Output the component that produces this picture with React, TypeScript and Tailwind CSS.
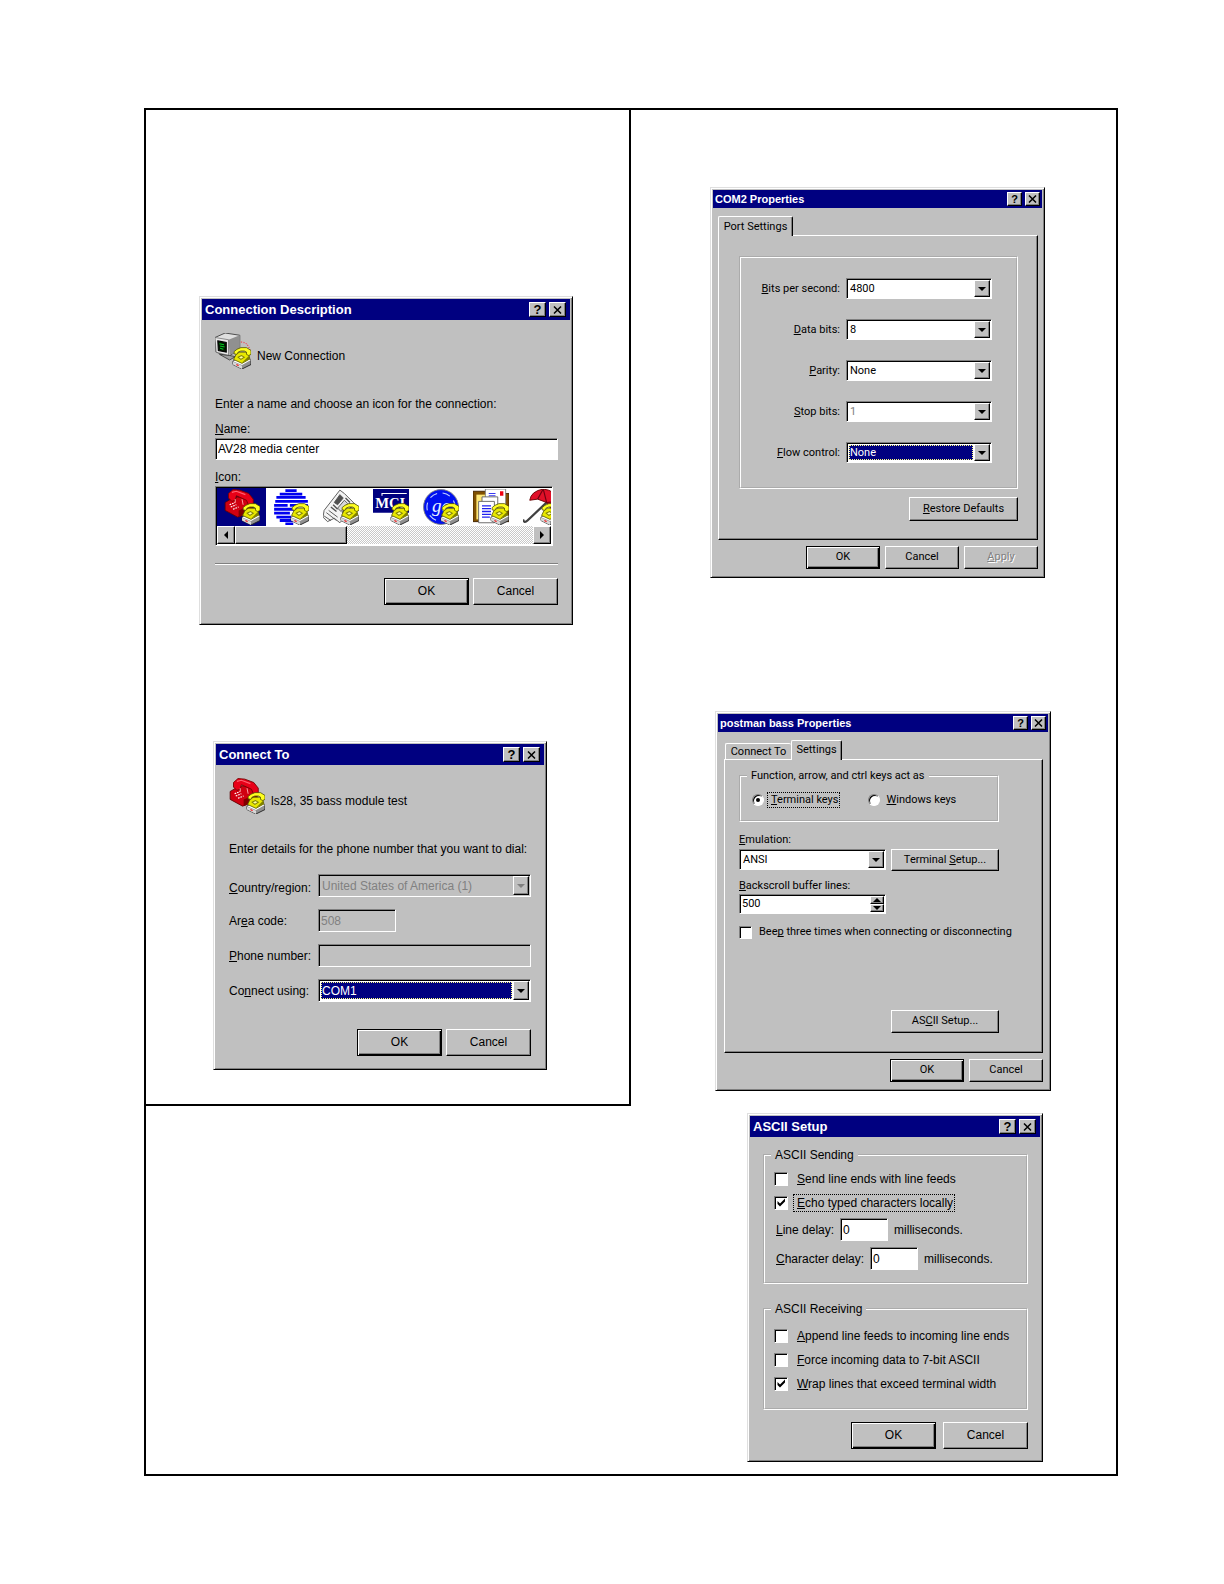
import { useId, useState } from 'react'
import type { ReactNode } from 'react'
import clsx from 'clsx'

const raised =
  'border border-t-white border-l-white border-r-black border-b-black bg-[#c0c0c0] shadow-[inset_-1px_-1px_#808080]'
const sunken =
  'border border-t-[#808080] border-l-[#808080] border-r-white border-b-white shadow-[inset_1px_1px_#000]'

// "&Name:" -> underlined N
function Mnemonic({ text }: { text: string }) {
  const i = text.indexOf('&')
  if (i < 0) return <>{text}</>
  return (
    <>
      {text.slice(0, i)}
      <u className="underline-offset-1 [text-decoration-skip-ink:none]">{text[i + 1]}</u>
      {text.slice(i + 2)}
    </>
  )
}

type DialogProps = {
  title: string
  small?: boolean
  className: string
  children: ReactNode
}

function Dialog({ title, small, className, children }: DialogProps) {
  const size = small ? 'h-[14px] w-[15px]' : 'h-[15px] w-[17px]'
  return (
    <section
      className={clsx(
        'border border-t-[#dfdfdf] border-l-[#dfdfdf] border-r-black border-b-black bg-[#c0c0c0] p-0.5 whitespace-nowrap shadow-[inset_1px_1px_#fff,inset_-1px_-1px_#808080]',
        small ? 'font-[Roboto,sans-serif] text-[11px] leading-[14px]' : 'text-[12px] leading-4',
        className,
      )}
    >
      <header
        className={clsx(
          'flex items-center gap-[3px] bg-[#000080] font-[Liberation_Sans,sans-serif] font-bold text-white',
          small ? 'h-[18px] pr-0.5 pl-0.5 text-[11px]' : 'h-[21px] pr-1 pl-[3px] text-[13px]',
        )}
      >
        <h2 className="flex-1">{title}</h2>
        <button aria-label="Help" className={clsx(raised, size, 'flex items-center justify-center text-black')}>
          ?
        </button>
        <button aria-label="Close" className={clsx(raised, size, 'flex items-center justify-center')}>
          <svg viewBox="0 0 9 8" className="h-2 w-[9px]">
            <path d="M1 .5 8 7.5M8 .5 1 7.5" stroke="#000" strokeWidth="1.5" />
          </svg>
        </button>
      </header>
      {children}
    </section>
  )
}

type PushButtonProps = {
  label: string
  primary?: boolean
  disabled?: boolean
  className: string
}

function PushButton({ label, primary, disabled, className }: PushButtonProps) {
  return (
    <button
      disabled={disabled}
      className={clsx(
        'pb-px text-center',
        primary
          ? 'border border-black bg-[#c0c0c0] shadow-[inset_1px_1px_#fff,inset_-1px_-1px_#000,inset_-2px_-2px_#808080]'
          : raised,
        disabled && 'text-[#808080] [text-shadow:1px_1px_#fff]',
        className,
      )}
    >
      <Mnemonic text={label} />
    </button>
  )
}

function ArrowIcon({ className, dim }: { className?: string; dim?: boolean }) {
  return (
    <svg viewBox="0 0 8 4" className={clsx('h-1 w-2', className)}>
      <path d="M0 0h8L4 4z" fill={dim ? '#808080' : '#000'} />
    </svg>
  )
}

type ComboProps = {
  id: string
  options: string[]
  focused?: boolean
  disabled?: boolean
  dim?: boolean
  className: string
}

function Combo({ id, options, focused, disabled, dim, className }: ComboProps) {
  return (
    <div className={clsx(sunken, 'flex p-px', disabled ? 'bg-[#c0c0c0]' : 'bg-white', className)}>
      <select
        id={id}
        disabled={disabled}
        className={clsx(
          'min-w-0 flex-1 appearance-none disabled:opacity-100',
          focused
            ? 'm-px bg-[#000080] pl-px text-white outline-1 -outline-offset-1 outline-dotted outline-[#ffff80]'
            : 'pl-0.5 outline-none',
          (disabled || dim) && 'text-[#808080]',
        )}
      >
        {options.map((o) => (
          <option key={o}>{o}</option>
        ))}
      </select>
      <span className={clsx(raised, 'flex w-4 items-center justify-center')}>
        <ArrowIcon dim={disabled} />
      </span>
    </div>
  )
}

type ToggleProps = {
  label: string
  checked?: boolean
  focused?: boolean
  small?: boolean
}

function Check({ label, checked, focused, small }: ToggleProps) {
  const id = useId()
  const [on, setOn] = useState(!!checked)
  return (
    <div className={clsx('flex items-center', small ? 'gap-[3px]' : 'gap-[5px]')}>
      <span className={clsx('grid shrink-0', small ? 'size-[13px]' : 'size-[14px]')}>
        <input
          id={id}
          type="checkbox"
          checked={on}
          onChange={(e) => setOn(e.target.checked)}
          className={clsx(sunken, 'col-start-1 row-start-1 appearance-none bg-white')}
        />
        {on && (
          <svg viewBox="0 0 14 14" className="pointer-events-none col-start-1 row-start-1">
            <path d="M3.5 5v3l2.500 2.500L11 5.500v-3L6 7.500z" fill="#000" />
          </svg>
        )}
      </span>
      <label
        htmlFor={id}
        className={clsx(
          'border border-dotted',
          small ? 'pl-[3px]' : 'pr-px pl-[3px]',
          focused ? 'border-black' : 'border-transparent',
        )}
      >
        <Mnemonic text={label} />
      </label>
    </div>
  )
}

function Radio({ label, checked, focused }: ToggleProps) {
  const id = useId()
  return (
    <div className="flex h-[15px] items-center gap-[3px]">
      <span className="grid size-3">
        <input
          id={id}
          type="radio"
          name="keys"
          defaultChecked={checked}
          className="peer col-start-1 row-start-1 appearance-none rounded-full border border-t-[#808080] border-l-[#808080] border-r-white border-b-white bg-white shadow-[inset_1px_1px_#000]"
        />
        <span className="pointer-events-none col-start-1 row-start-1 hidden size-1 place-self-center rounded-full bg-black peer-checked:block" />
      </span>
      <label htmlFor={id} className={clsx('border border-dotted pl-[3px]', focused ? 'border-black' : 'border-transparent')}>
        <Mnemonic text={label} />
      </label>
    </div>
  )
}

function Group({ legend, className, children }: { legend?: string; className: string; children: ReactNode }) {
  return (
    <fieldset className={clsx('border-2 border-white [border-style:groove]', className)}>
      {legend && <legend className="ml-1.5 px-1">{legend}</legend>}
      {children}
    </fieldset>
  )
}

function TextBox({ id, value, disabled, className }: { id: string; value: string; disabled?: boolean; className: string }) {
  return (
    <input
      id={id}
      type="text"
      defaultValue={value}
      disabled={disabled}
      className={clsx(sunken, 'min-w-0 px-0.5', disabled ? 'bg-[#c0c0c0] text-[#808080]' : 'bg-white', className)}
    />
  )
}

/* ---------- icons ---------- */

function YellowPhone() {
  return (
    <g>
      <path d="M16 25v3l8 4 8-4v-4l-7-3z" fill="#909090" stroke="#202020" strokeWidth=".8" />
      <path d="M16 25l9-4 7 3-8 4.500z" fill="#fff" />
      <path d="M16 25.500V28l8 4v-3z" fill="#d8d8d8" />
      <path d="M19 28l2 1" stroke="#f02020" />
      <path d="M16.500 23.500 19 18.500l3-1.500h6l2 2 1 4-7 4z" fill="#e8e800" stroke="#505000" strokeWidth=".7" />
      <path d="M20.500 21.500l3-1.500 2.500 1.500-3 2z" fill="#ffffa0" stroke="#808000" strokeWidth=".9" />
      <path d="M24 26.500 30 20.500l.8 2.500z" fill="#808000" />
      <path
        d="M17 18.500v-2l2.500-2 3.500-1.500h5l4 2.500v3.500l-2 1-2-1v-2l-2-1h-3l-2.500 1-1 2z"
        fill="#ffff20"
        stroke="#505000"
        strokeWidth=".7"
      />
    </g>
  )
}

function RedPhone() {
  return (
    <g>
      <path d="M1 12 6 9l6-2 9 1 4 6v6l-13 5-11-6z" fill="#d00010" stroke="#500" strokeWidth=".7" />
      <path d="M13 19 25 14v6l-12 5z" fill="#800000" />
      <path d="M4 4 8 .5 14 1l8 3 4 5v5l-4 1-2-5-9-4-1 4-3 1-3-3z" fill="#e80018" stroke="#700" strokeWidth=".8" />
      <path d="M7 3l4-1 8 3" fill="none" stroke="#ff6070" />
      <path d="M5 14l5-2M6 16l5-2M8 18l5-2" stroke="#fff" strokeDasharray="1.500 .8" />
      <path d="M10 9v3M16 9l1 5" stroke="#ffb0b0" strokeWidth=".8" />
    </g>
  )
}

function Monitor() {
  return (
    <g>
      <path d="M0 4 9 0l13 2v12l-10 7L1 17z" fill="#dfdfdf" stroke="#404040" strokeWidth=".8" />
      <path d="M12 6 22 2v12l-9 6z" fill="#909090" />
      <path d="M0 4l12 2v14L1 17z" fill="#e8e8e8" stroke="#606060" strokeWidth=".6" />
      <path d="M2.500 7l7.500 1.500V17L3 15.500z" fill="#001800" stroke="#000" />
      <path d="M4 9.500l4 1M4.500 11.500l4 1M4.500 13.500l3 1" stroke="#00d020" />
      <path d="M4 19l9 5 5-3-5-1z" fill="#a0a0a0" stroke="#303030" strokeWidth=".7" />
      <path d="M23 8q6 0 8 7" fill="none" stroke="#f04050" strokeDasharray="1 1.200" />
    </g>
  )
}

function Globe() {
  return (
    <path
      d="M11 1.500h10M6 4.500h20M3 7.500h26M2 11h18M8 11h23M1 14.500h12M15 14.500h16M1 18h20M1 21.500h14M3 25h13M6 28h14M11 31h7"
      stroke="#0000f0"
      strokeWidth="2.500"
    />
  )
}

function News() {
  return (
    <g stroke="#505050" strokeWidth=".8">
      <path d="M1 19 15 1l4 3 10 10-14 16-5-4-6 3-4-4z" fill="#f4f4f4" />
      <path d="M3 21l9 7M5 19l8 6M1 24l6 4" fill="none" />
      <path d="M10 12l5-7 3 3-5 6z" fill="#505050" />
      <path d="M13 17l6-7 3 3-6 7z" fill="#d8d8d8" />
      <path d="M17 21l7-8M19 23l7-8M9 14l4 4M7 16l5 4M20 8l4 4" fill="none" strokeWidth="1.200" />
    </g>
  )
}

function Mci() {
  return (
    <g>
      <path d="M0 0h32v21H0z" fill="#000080" />
      <path d="M8 6V4h22" fill="none" stroke="#fff" />
      <text x="2" y="17" fill="#fff" fontSize="13" fontWeight="700" fontFamily="Liberation Serif, serif">
        MCI
      </text>
    </g>
  )
}

function Ge() {
  return (
    <g>
      <circle cx="16" cy="16" r="15.500" fill="#0010f0" stroke="#808080" strokeWidth=".8" />
      <circle cx="16" cy="16" r="12.500" fill="none" stroke="#c0d0ff" strokeDasharray="7 5" />
      <text x="8" y="20" fill="#e8f0ff" fontSize="17" fontStyle="italic" fontFamily="Liberation Serif, serif">
        ge
      </text>
    </g>
  )
}

function Files() {
  return (
    <g strokeWidth=".8">
      <path d="M0 2h14l3 2h15v25H0z" fill="#805000" stroke="#402000" />
      <path d="M3 5h26v22H3z" fill="#ffe878" />
      <path d="M11 0h18v15H11z" fill="#fff" stroke="#808080" />
      <path d="M14 4h6M14 6h6" stroke="#2020f0" />
      <path d="M24 2h3v4h-3z" fill="#f00010" />
      <path d="M8 7h14v17H8z" fill="#fff" stroke="#606060" />
      <path d="M5 11h14v19H5z" fill="#fff" stroke="#606060" />
      <path d="M8 15h8M8 17.500h8M8 20h8M8 22.500h8M8 25h7" stroke="#2020f0" strokeWidth="1.200" />
    </g>
  )
}

function Umbrella() {
  return (
    <g>
      <path d="M22 11 4 28q-3 3-4-1" fill="none" stroke="#404040" strokeWidth="2" />
      <path d="M6 10Q7 2 18 0q11 1 15 12l-5 10-7-10-8-3z" fill="#e01028" stroke="#600" strokeWidth=".8" />
      <path d="M13 9 18 0l3 12 11-1" fill="none" stroke="#700010" />
    </g>
  )
}

function PhoneIcon({ children }: { children: ReactNode }) {
  return (
    <svg viewBox="0 0 32 32" className="size-9 shrink-0">
      {children}
      <YellowPhone />
    </svg>
  )
}

const connectionIcons = [
  { name: 'Phone', art: <RedPhone /> },
  { name: 'Globe', art: <Globe /> },
  { name: 'Newspaper', art: <News /> },
  { name: 'MCI', art: <Mci /> },
  { name: 'GE', art: <Ge /> },
  { name: 'Files', art: <Files /> },
  { name: 'Umbrella', art: <Umbrella /> },
]

/* ---------- dialogs ---------- */

function ConnectionDescription() {
  return (
    <Dialog title="Connection Description" className="w-[374px]">
      <div className="flex flex-col pt-[13px] pr-3 pb-[17px] pl-[13px]">
        <div className="flex gap-1.5">
          <PhoneIcon>
            <Monitor />
          </PhoneIcon>
          <p className="pt-[15px]">New Connection</p>
        </div>
        <p className="mt-[27px]">Enter a name and choose an icon for the connection:</p>
        <label htmlFor="name" className="mt-[9px]">
          <Mnemonic text="&Name:" />
        </label>
        <TextBox id="name" value="AV28 media center" className="mt-px h-[22px]" />
        <p id="icon-label" className="mt-[9px]">
          <Mnemonic text="&Icon:" />
        </p>
        <div className={clsx(sunken, 'mt-px mr-[5px] bg-white p-px')}>
          <div role="listbox" aria-labelledby="icon-label" className="flex overflow-hidden">
            {connectionIcons.map((icon, i) => (
              <button
                key={icon.name}
                role="option"
                aria-label={icon.name}
                aria-selected={i === 0}
                className={clsx(
                  'flex h-[38px] shrink-0 items-center justify-center',
                  i === 0 ? 'w-[49px] bg-[#000080]' : 'w-[50px]',
                )}
              >
                <PhoneIcon>{icon.art}</PhoneIcon>
              </button>
            ))}
          </div>
          <div className="flex h-[18px] bg-[repeating-conic-gradient(#fff_0_25%,#c8c8c8_0_50%)] bg-[length:2px_2px]">
            <button aria-label="Scroll left" className={clsx(raised, 'flex w-[18px] items-center justify-center')}>
              <ArrowIcon className="rotate-90" />
            </button>
            <div className={clsx(raised, 'w-[112px]')} />
            <button aria-label="Scroll right" className={clsx(raised, 'ml-auto flex w-[18px] items-center justify-center')}>
              <ArrowIcon className="-rotate-90" />
            </button>
          </div>
        </div>
        <hr className="mt-[17px] h-0.5 border-t border-b border-t-[#808080] border-b-white" />
        <div className="mt-[13px] flex justify-end gap-1">
          <PushButton label="OK" primary className="h-[27px] w-[85px]" />
          <PushButton label="Cancel" className="h-[27px] w-[85px]" />
        </div>
      </div>
    </Dialog>
  )
}

function ConnectTo() {
  return (
    <Dialog title="Connect To" className="w-[334px]">
      <div className="px-[13px] pt-[13px] pb-[11px]">
        <div className="flex gap-1.5">
          <PhoneIcon>
            <RedPhone />
          </PhoneIcon>
          <p className="pt-[15px]">ls28, 35 bass module test</p>
        </div>
        <p className="mt-[27px]">Enter details for the phone number that you want to dial:</p>
        <div className="mt-[17px] grid grid-cols-[89px_1fr] items-center gap-y-3">
          <label htmlFor="country" className="pt-1">
            <Mnemonic text="&Country/region:" />
          </label>
          <Combo id="country" options={['United States of America (1)']} disabled className="h-[23px]" />
          <label htmlFor="area">
            <Mnemonic text="Ar&ea code:" />
          </label>
          <TextBox id="area" value="508" disabled className="h-[23px] w-[78px]" />
          <label htmlFor="phone">
            <Mnemonic text="&Phone number:" />
          </label>
          <TextBox id="phone" value="" disabled className="h-[23px]" />
          <label htmlFor="using">
            <Mnemonic text="Co&nnect using:" />
          </label>
          <Combo id="using" options={['COM1', 'COM2']} focused className="h-[23px]" />
        </div>
        <div className="mt-[27px] flex justify-end gap-1">
          <PushButton label="OK" primary className="h-[27px] w-[85px]" />
          <PushButton label="Cancel" className="h-[27px] w-[85px]" />
        </div>
      </div>
    </Dialog>
  )
}

const portFields = [
  { id: 'bps', label: '&Bits per second:', options: ['4800', '9600'] },
  { id: 'data', label: '&Data bits:', options: ['8', '7'] },
  { id: 'parity', label: '&Parity:', options: ['None', 'Even', 'Odd'] },
  { id: 'stop', label: '&Stop bits:', options: ['1', '2'], dim: true },
  { id: 'flow', label: '&Flow control:', options: ['None', 'Hardware'], focused: true },
]

const tab = 'rounded-t-[2px] border border-b-0 border-t-white border-l-white border-r-black bg-[#c0c0c0] text-center'
const panel = 'border border-t-white border-l-white border-r-black border-b-black shadow-[inset_-1px_-1px_#808080]'

function Com2Properties() {
  return (
    <Dialog title="COM2 Properties" small className="w-[335px]">
      <div className="pt-2 pr-1 pb-1.5 pl-[5px]">
        <div role="tablist" className="flex">
          <button role="tab" aria-selected className={clsx(tab, 'relative z-10 -mb-px h-5 w-[75px] shadow-[inset_-1px_0_#808080]')}>
            Port Settings
          </button>
        </div>
        <div className={clsx(panel, 'pt-5 pr-[19px] pb-[18px] pl-5')}>
          <Group className="flex flex-col gap-5 pt-5 pb-6">
            {portFields.map((f) => (
              <div key={f.id} className="flex items-center gap-1.5">
                <label htmlFor={f.id} className="w-[99px] text-right">
                  <Mnemonic text={f.label} />
                </label>
                <Combo id={f.id} options={f.options} dim={f.dim} focused={f.focused} className="h-[21px] w-[146px]" />
              </div>
            ))}
          </Group>
          <div className="mt-2 flex justify-end">
            <PushButton label="&Restore Defaults" className="h-6 w-[109px]" />
          </div>
        </div>
        <div className="mt-1.5 flex justify-end gap-[5px]">
          <PushButton label="OK" primary className="h-[23px] w-[74px]" />
          <PushButton label="Cancel" className="h-[23px] w-[74px]" />
          <PushButton label="&Apply" disabled className="h-[23px] w-[74px]" />
        </div>
      </div>
    </Dialog>
  )
}

function PostmanProperties() {
  return (
    <Dialog title="postman bass Properties" small className="w-[336px]">
      <div className="pt-2 pr-[5px] pb-1.5 pl-1.5">
        <div role="tablist" className="flex items-end pl-px">
          <button role="tab" aria-selected={false} className={clsx(tab, 'h-4 w-[66px] border-r-0')}>
            Connect To
          </button>
          <button
            role="tab"
            aria-selected
            className={clsx(tab, 'relative z-10 -mb-px h-5 w-[51px] pb-0.5 shadow-[inset_-1px_0_#808080]')}
          >
            Settings
          </button>
        </div>
        <div className={clsx(panel, 'pt-[9px] pr-[43px] pb-[19px] pl-[14px]')}>
          <Group legend="Function, arrow, and ctrl keys act as" className="pb-[13px]">
            <div className="flex gap-7 pt-[9px] pl-[11px]">
              <Radio label="&Terminal keys" checked focused />
              <Radio label="&Windows keys" />
            </div>
          </Group>
          <label htmlFor="emulation" className="mt-[11px] block">
            <Mnemonic text="&Emulation:" />
          </label>
          <div className="mt-0.5 flex gap-[5px]">
            <Combo id="emulation" options={['ANSI', 'TTY', 'VT100']} className="h-[21px] w-[147px]" />
            <PushButton label="Terminal &Setup..." className="h-[22px] flex-1" />
          </div>
          <label htmlFor="buffer" className="mt-2 block">
            <Mnemonic text="&Backscroll buffer lines:" />
          </label>
          <div className={clsx(sunken, 'mt-px flex h-5 w-[147px] bg-white p-px')}>
            <input id="buffer" type="text" defaultValue="500" className="min-w-0 flex-1 pl-px outline-none" />
            <div className="flex w-[14px] flex-col">
              <button aria-label="More" className={clsx(raised, 'flex flex-1 items-center justify-center')}>
                <ArrowIcon className="h-0.5 w-1 rotate-180" />
              </button>
              <button aria-label="Fewer" className={clsx(raised, 'flex flex-1 items-center justify-center')}>
                <ArrowIcon className="h-0.5 w-1" />
              </button>
            </div>
          </div>
          <div className="mt-[10px]">
            <Check label="Bee&p three times when connecting or disconnecting" small />
          </div>
          <div className="mt-[70px] flex justify-end">
            <PushButton label="AS&CII Setup..." className="h-[23px] w-[108px]" />
          </div>
        </div>
        <div className="mt-1.5 flex justify-end gap-[5px]">
          <PushButton label="OK" primary className="h-[23px] w-[74px]" />
          <PushButton label="Cancel" className="h-[23px] w-[74px]" />
        </div>
      </div>
    </Dialog>
  )
}

function DelayField({ id, label }: { id: string; label: string }) {
  return (
    <div className="flex items-center gap-1.5 pl-0.5">
      <label htmlFor={id}>
        <Mnemonic text={label} />
      </label>
      <TextBox id={id} value="0" className="h-[23px] w-12" />
      <span>milliseconds.</span>
    </div>
  )
}

function AsciiSetup() {
  return (
    <Dialog title="ASCII Setup" className="w-[296px]">
      <div className="pt-2.5 pr-3 pb-2.5 pl-[13px]">
        <Group legend="ASCII Sending" className="pb-3">
          <div className="flex flex-col gap-1.5 pt-[7px] pl-[9px]">
            <Check label="&Send line ends with line feeds" />
            <Check label="&Echo typed characters locally" checked focused />
            <DelayField id="line-delay" label="&Line delay:" />
            <DelayField id="char-delay" label="&Character delay:" />
          </div>
        </Group>
        <Group legend="ASCII Receiving" className="mt-[17px] pb-[15px]">
          <div className="flex flex-col gap-1.5 pt-2.5 pl-[9px]">
            <Check label="&Append line feeds to incoming line ends" />
            <Check label="&Force incoming data to 7-bit ASCII" />
            <Check label="&Wrap lines that exceed terminal width" checked />
          </div>
        </Group>
        <div className="mt-3 flex justify-end gap-[7px]">
          <PushButton label="OK" primary className="h-[27px] w-[85px]" />
          <PushButton label="Cancel" className="h-[27px] w-[85px]" />
        </div>
      </div>
    </Dialog>
  )
}

export default function App() {
  return (
    <main className="min-h-screen bg-white pt-[108px] pr-[106px] pb-[108px] pl-36 font-[Liberation_Sans,Arial,sans-serif] text-black">
      <div className="grid grid-cols-2 items-start border-2 border-black">
        <div className="flex flex-col gap-[116px] border-r-2 border-b-2 border-black pt-[186px] pb-[34px]">
          <div className="pl-[53px]">
            <ConnectionDescription />
          </div>
          <div className="pl-[67px]">
            <ConnectTo />
          </div>
        </div>
        <div className="pt-[77px] pb-3">
          <div className="pl-[79px]">
            <Com2Properties />
          </div>
          <div className="mt-[133px] pl-[84px]">
            <PostmanProperties />
          </div>
          <div className="mt-[22px] pl-[116px]">
            <AsciiSetup />
          </div>
        </div>
      </div>
    </main>
  )
}
